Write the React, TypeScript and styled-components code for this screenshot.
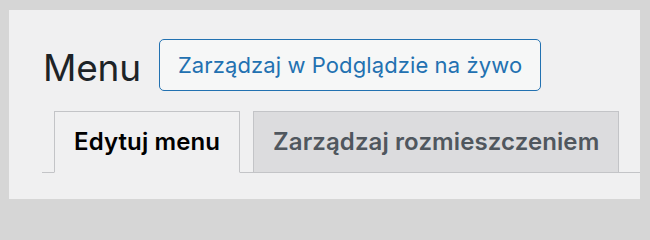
import styled, { createGlobalStyle } from 'styled-components';

const GlobalStyle = createGlobalStyle`
  html, body {
    margin: 0;
    padding: 0;
    background: #d6d6d6;
  }
  * {
    box-sizing: border-box;
  }
`;

const Frame = styled.div`
  width: 650px;
  height: 209px;
  padding: 10px 10px 10px 9px;
`;

const Panel = styled.div`
  height: 100%;
  background: #f0f0f1;
  padding: 29px 0 0 34px;
  font-family: Inter, 'Liberation Sans', sans-serif;
`;

const HeadingRow = styled.div`
  display: flex;
  align-items: center;
  gap: 18px;
  height: 52px;
`;

const Title = styled.h1`
  margin: 0;
  font-size: 37px;
  font-weight: 400;
  color: #1d2327;
  letter-spacing: -0.2px;
  line-height: 1;
  padding-top: 4px;
`;

const ActionButton = styled.a`
  display: flex;
  align-items: center;
  height: 52px;
  padding: 0 18px;
  border: 1px solid #2271b1;
  border-radius: 5px;
  background: #f6f7f7;
  color: #2271b1;
  font-size: 22px;
  letter-spacing: 0.1px;
  text-decoration: none;
`;

const TabBar = styled.nav`
  display: flex;
  gap: 13px;
  margin: 20px 0 0 -1px;
  padding-left: 12px;
  border-bottom: 1px solid #c3c4c7;
`;

const Tab = styled.a<{ $active?: boolean }>`
  display: flex;
  align-items: center;
  height: 62px;
  margin-bottom: -1px;
  padding: 0 19px 2px;
  border: 1px solid #c3c4c7;
  border-bottom-color: ${(p) => (p.$active ? '#f0f0f1' : '#c3c4c7')};
  background: ${(p) => (p.$active ? '#f0f0f1' : '#dcdcde')};
  color: ${(p) => (p.$active ? '#000' : '#50575e')};
  font-size: 24px;
  font-weight: 600;
  letter-spacing: 0.1px;
  text-decoration: none;
`;

const App = () => (
  <>
    <GlobalStyle />
    <Frame>
      <Panel>
        <HeadingRow>
          <Title>Menu</Title>
          <ActionButton href="#">Zarządzaj w Podglądzie na żywo</ActionButton>
        </HeadingRow>
        <TabBar>
          <Tab $active href="#">
            Edytuj menu
          </Tab>
          <Tab href="#">Zarządzaj rozmieszczeniem</Tab>
        </TabBar>
      </Panel>
    </Frame>
  </>
);

export default App;
